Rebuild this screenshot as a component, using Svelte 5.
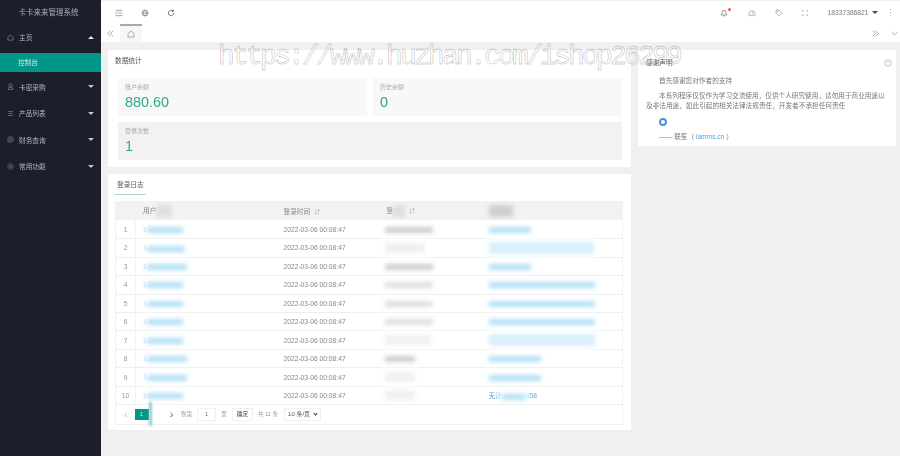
<script>
  const menu = [
    { name: "卡密采购", icon: "user" },
    { name: "产品列表", icon: "list" },
    { name: "财务查询", icon: "money" },
    { name: "常用功能", icon: "gear" },
  ];

  // widths of the blurred parts of each table row
  const rows = [
    { user: 36, ip: 48, ipStyle: "dark", addr: 42, addrTall: false },
    { user: 38, ip: 40, ipStyle: "soft", addr: 105, addrTall: true },
    { user: 40, ip: 48, ipStyle: "dark", addr: 42, addrTall: false },
    { user: 36, ip: 48, ipStyle: "mid", addr: 106, addrTall: false },
    { user: 36, ip: 48, ipStyle: "mid", addr: 106, addrTall: false },
    { user: 36, ip: 48, ipStyle: "mid", addr: 106, addrTall: false },
    { user: 36, ip: 46, ipStyle: "soft", addr: 106, addrTall: true },
    { user: 40, ip: 30, ipStyle: "dark", addr: 52, addrTall: false },
    { user: 40, ip: 30, ipStyle: "soft", addr: 52, addrTall: false },
    { user: 36, ip: 30, ipStyle: "soft", addr: 0, addrTall: false },
  ];
</script>

<div class="app">
  <aside class="sidebar">
    <div class="brand">卡卡来来管理系统</div>
    <div class="menu-item">
      <svg class="micon" viewBox="0 0 12 12"><path d="M1.500 5.500 6 1.500l4.500 4v5h-9z" /></svg>
      <span>主页</span>
      <i class="caret up"></i>
    </div>
    <div class="sub-item">控制台</div>
    {#each menu as m}
      <div class="menu-item">
        <svg class="micon" viewBox="0 0 12 12">
          {#if m.icon === "user"}
            <circle cx="6" cy="4" r="2.800" /><path d="M2 11c0-3 1.500-4 4-4s4 1 4 4z" />
          {:else if m.icon === "list"}
            <path d="M2 2.500h8M3 6h6M2 9.500h8" />
          {:else if m.icon === "money"}
            <circle cx="6" cy="6" r="4.700" /><circle cx="6" cy="6" r="1.700" />
          {:else}
            <circle cx="6" cy="6" r="4.500" stroke-dasharray="2 .6" /><circle cx="6" cy="6" r="1.800" />
          {/if}
        </svg>
        <span>{m.name}</span>
        <i class="caret"></i>
      </div>
    {/each}
  </aside>

  <div class="main">
    <header class="topbar">
      <div class="tools">
        <svg viewBox="0 0 12 12"><path d="M1 2h10M4.500 6H11M1 10h10M1 4.500 3 6 1 7.500" /></svg>
        <svg viewBox="0 0 12 12"><circle cx="6" cy="6" r="4.500" /><path d="M1.500 6h9M6 1.500c-3 3-3 6 0 9M6 1.500c3 3 3 6 0 9" /></svg>
        <svg class="dark" viewBox="0 0 12 12"><path d="M10 6a4 4 0 1 1-1.200-2.800M9.500 1v2.500H7" /></svg>
      </div>
      <div class="top-right">
        <span class="bell">
          <svg viewBox="0 0 12 12"><path d="M2 9h8L9 7.500V5a3 3 0 0 0-6 0v2.500zM5 10.500h2" /></svg>
          <i class="dot"></i>
        </span>
        <svg viewBox="0 0 12 12"><path d="M1.500 10V7a4.500 4.500 0 0 1 9 0v3zM6 8l2-4" /></svg>
        <svg viewBox="0 0 12 12"><path d="M1.500 1.500h4.500l4.500 4.500L6 10.500 1.500 6z" /><circle cx="4" cy="4" r=".7" /></svg>
        <svg class="small" viewBox="0 0 12 12"><path d="M1 4V1h3M8 1h3v3M11 8v3H8M4 11H1V8" /></svg>
        <span class="account">18337386821<i class="caret ink"></i></span>
        <span class="more"><i></i><i></i><i></i></span>
      </div>
    </header>

    <nav class="tabs">
      <svg class="chev" viewBox="0 0 10 10"><path d="M5 1 1 5l4 4M9 1 5 5l4 4" /></svg>
      <div class="tab">
        <svg viewBox="0 0 12 12"><path d="M1.500 5.500 6 1.500l4.500 4v5h-9z" /></svg>
      </div>
      <div class="tabs-end">
        <svg class="chev" viewBox="0 0 10 10"><path d="M1 1l4 4-4 4M5 1l4 4-4 4" /></svg>
        <svg class="chev" viewBox="0 0 10 10"><path d="M1 3l4 4 4-4" /></svg>
      </div>
    </nav>

    <div class="content">
      <div class="left">
        <section class="card stats">
          <h3>数据统计</h3>
          <div class="stat-grid">
            <div class="stat"><label>账户余额</label><strong>880.60</strong></div>
            <div class="stat"><label>历史余额</label><strong>0</strong></div>
            <div class="stat wide"><label>登录次数</label><strong>1</strong></div>
          </div>
        </section>

        <section class="card logs">
          <div class="tab-title"><span>登录日志</span></div>
          <table>
            <thead>
              <tr>
                <th class="num"></th>
                <th class="user">用户<b class="smudge head"></b></th>
                <th class="time">登录时间 <em>⇵</em></th>
                <th class="ip-head">登<b class="smudge head short"></b> <em>⇵</em></th>
                <th class="addr"><b class="smudge head wide"></b></th>
              </tr>
            </thead>
            <tbody>
              {#each rows as r, i}
                <tr>
                  <td class="num">{i + 1}</td>
                  <td class="user"><span class="link">1</span><b class="smudge blue" style="width: {r.user}px"></b></td>
                  <td class="time">2022-03-06 00:08:47</td>
                  <td class="ip"><b class="smudge {r.ipStyle}" style="width: {r.ip}px"></b></td>
                  <td class="addr">
                    {#if r.addr}
                      <b class="smudge blue" class:tall={r.addrTall} style="width: {r.addr}px"></b>
                    {:else}
                      <span class="link">无法</span><b class="smudge blue" style="width: 24px"></b><span class="link">958</span>
                    {/if}
                  </td>
                </tr>
              {/each}
            </tbody>
          </table>
          <div class="pager">
            <span class="arrow">‹</span>
            <span class="page">1</span>
            <b class="smudge strip"></b>
            <span class="arrow next">›</span>
            <span>到第</span>
            <span class="box">1</span>
            <span>页</span>
            <span class="box ok">确定</span>
            <span>共 11 条</span>
            <span class="box size">10 条/页 <i class="vee"></i></span>
          </div>
        </section>
      </div>

      <section class="card thanks">
        <div class="thanks-head">
          <h3>感谢声明</h3>
          <svg viewBox="0 0 12 12"><circle cx="6" cy="6" r="5" /><path d="M6 3.500v3M6 8v.8" /></svg>
        </div>
        <p>首先感谢您对作者的支持</p>
        <p>本系列程序仅仅作为学习交流使用，仅供个人研究使用，请勿用于商业用途以及非法用途，如此引起的相关法律法规责任，开发者不承担任何责任</p>
        <div class="ring"></div>
        <p class="sign">—— 联笙（ <span class="link">lamms.cn</span> ）</p>
      </section>
    </div>
  </div>

  <div class="watermark">https://www.huzhan.com/ishop26299</div>
</div>

<style>
  :global(body) {
    margin: 0;
    background: #f0f0f0;
  }

  .app {
    position: relative;
    display: flex;
    width: 900px;
    height: 456px;
    overflow: hidden;
    font-family: "Liberation Sans", "Noto Sans CJK SC", sans-serif;
    font-size: 6.700px;
    color: #666;
  }

  svg {
    fill: none;
    stroke: currentColor;
    stroke-width: 1;
  }

  .sidebar {
    width: 101px;
    flex-shrink: 0;
    background: #1c1f2b;
    color: #b5b8bf;
    filter: blur(0.3px);
  }

  .brand {
    height: 24px;
    line-height: 25px;
    padding-right: 4px;
    text-align: center;
    font-size: 7.500px;
    color: #a8abb2;
  }

  .menu-item {
    display: flex;
    align-items: center;
    height: 26.400px;
    padding: 0 7px;
  }

  .menu-item span {
    margin-left: 5px;
    flex: 1;
  }

  .micon {
    width: 7px;
    height: 7px;
    color: #9a9da5;
  }

  .caret {
    width: 0;
    height: 0;
    border-left: 3px solid transparent;
    border-right: 3px solid transparent;
    border-top: 3px solid #c6c8cc;
  }

  .caret.up {
    border-top: 0;
    border-bottom: 3px solid #e8e8e8;
  }

  .caret.ink {
    display: inline-block;
    margin-left: 3px;
    vertical-align: 1px;
    border-top-color: #444;
  }

  .sub-item {
    height: 19px;
    line-height: 19px;
    padding-left: 18px;
    margin: 2.600px 0 1.800px;
    background: #009688;
    color: #cfeae6;
  }

  .main {
    flex: 1;
    min-width: 0;
    display: flex;
    flex-direction: column;
    filter: blur(0.3px);
  }

  .topbar {
    height: 23px;
    flex-shrink: 0;
    display: flex;
    justify-content: space-between;
    align-items: center;
    padding: 0 9px 0 14px;
    background: #fff;
    border-top: 1px solid #eee;
    color: #555;
  }

  .topbar svg {
    width: 8px;
    height: 8px;
    display: block;
  }

  .tools {
    display: flex;
    gap: 18px;
    color: #777;
  }

  .tools .dark {
    color: #333;
  }

  .top-right {
    display: flex;
    align-items: center;
    gap: 19.300px;
    color: #999;
  }

  .topbar svg.small {
    width: 6px;
    height: 6px;
  }

  .bell {
    position: relative;
    color: #666;
  }

  .dot {
    position: absolute;
    top: -1px;
    right: -3px;
    width: 3px;
    height: 3px;
    border-radius: 50%;
    background: #ff5722;
  }

  .account {
    color: #777;
    margin-left: 0;
    white-space: nowrap;
  }

  .more {
    display: flex;
    flex-direction: column;
    gap: 1.500px;
    margin-left: -7.300px;
  }

  .more i {
    width: 1.500px;
    height: 1.500px;
    background: #999;
    border-radius: 50%;
  }

  .tabs {
    height: 18px;
    flex-shrink: 0;
    display: flex;
    align-items: center;
    padding: 0 2px 0 6px;
    background: #fff;
  }

  .chev {
    width: 7px;
    height: 7px;
    color: #888;
  }

  .tab {
    width: 22px;
    height: 18px;
    margin-left: 6px;
    display: flex;
    align-items: center;
    justify-content: center;
    box-sizing: border-box;
    border-top: 2px solid #a9a9a9;
    background: #f6f6f6;
    color: #888;
  }

  .tab svg {
    width: 8px;
    height: 8px;
  }

  .tabs-end {
    margin-left: auto;
    display: flex;
    gap: 12px;
  }

  .content {
    flex: 1;
    display: flex;
    align-items: flex-start;
    gap: 7px;
    padding: 8px 4px 0 7px;
    background: #f0f0f0;
  }

  .left {
    width: 523px;
    flex-shrink: 0;
    display: flex;
    flex-direction: column;
    gap: 7px;
  }

  .card {
    background: #fff;
    border-radius: 1px;
  }

  h3 {
    margin: 0;
    font-size: 6.700px;
    font-weight: 400;
    color: #555;
  }

  .stats {
    height: 117px;
    box-sizing: border-box;
    padding: 6px 9px 0 7px;
  }

  .stats h3 {
    line-height: 9px;
  }

  .stat-grid {
    display: grid;
    grid-template-columns: 249px 249px;
    gap: 6px;
    margin: 13px 0 0 3px;
  }

  .stat {
    height: 38px;
    box-sizing: border-box;
    padding: 5px 7px;
    background: #f8f8f8;
  }

  .stat.wide {
    grid-column: span 2;
    background: #f2f2f2;
  }

  .stat label {
    display: block;
    font-size: 6px;
    line-height: 8px;
    color: #aaa;
  }

  .stat strong {
    display: block;
    margin-top: 2px;
    font-size: 14.400px;
    line-height: 18px;
    font-weight: 400;
    color: #2fa98c;
  }

  .logs {
    height: 256px;
    box-sizing: border-box;
    padding: 0 8px 0 7px;
  }

  .tab-title {
    height: 21px;
    display: flex;
    align-items: flex-end;
    margin-bottom: 6px;
  }

  .tab-title span {
    width: 29px;
    padding: 0 0 5px 2px;
    white-space: nowrap;
    color: #555;
    border-bottom: 1px solid #a9d5cc;
  }

  table {
    width: 508px;
    border-collapse: collapse;
    table-layout: fixed;
    border-left: 1px solid #f2f2f2;
    border-right: 1px solid #f2f2f2;
  }

  th {
    height: 19.300px;
    padding: 0;
    text-align: left;
    font-weight: 400;
    background: #f2f2f2;
    color: #888;
  }

  em {
    font-style: normal;
    font-size: 6px;
    color: #aaa;
    margin-left: 2px;
  }

  td {
    height: 18.440px;
    box-sizing: border-box;
    padding: 0;
    border-bottom: 1px solid #eee;
    white-space: nowrap;
    overflow: visible;
    color: #888;
  }

  .num {
    width: 19px;
    text-align: center;
    color: #999;
    border-right: 1px solid #f2f2f2;
  }

  .user {
    width: 148px;
    padding-left: 7px;
    box-sizing: border-box;
  }

  .time {
    width: 103px;
  }

  .ip-head {
    width: 102px;
  }

  .ip .smudge {
    margin-left: -2px;
  }

  .link {
    color: #4aa6dc;
  }

  .smudge {
    display: inline-block;
    height: 6px;
    vertical-align: middle;
    filter: blur(2px);
  }

  .smudge.blue {
    background: #b4e0f8;
    box-shadow: 0 0 0 4px rgba(255, 255, 255, 0.8);
  }

  .smudge.tall {
    height: 12px;
    background: #d9effb;
  }

  .smudge.dark {
    background: #cfcfcf;
    box-shadow: 0 0 0 4px rgba(255, 255, 255, 0.8);
  }

  .smudge.mid {
    background: #e0e0e0;
    box-shadow: 0 0 0 4px rgba(255, 255, 255, 0.8);
  }

  .smudge.soft {
    height: 10px;
    background: #f0f0f0;
    box-shadow: 0 0 0 4px rgba(255, 255, 255, 0.8);
  }

  .smudge.head {
    width: 16px;
    height: 12px;
    background: #dedede;
  }

  .smudge.head.short {
    width: 12px;
  }

  .smudge.head.wide {
    width: 24px;
    background: #cfcfcf;
  }

  .smudge.strip {
    width: 3px;
    height: 24px;
    margin-left: -5px;
    background: #8fcfc6;
    filter: blur(1px);
  }

  .pager {
    display: flex;
    align-items: center;
    gap: 5px;
    width: 498px;
    height: 18.500px;
    padding-left: 8px;
    border: 1px solid #f2f2f2;
    border-top: 0;
    color: #999;
    font-size: 5.600px;
  }

  .arrow {
    font-size: 11px;
    line-height: 10px;
    color: #ccc;
  }

  .arrow.next {
    color: #666;
    margin: 0 2.500px 0 13px;
  }

  .page {
    width: 14px;
    height: 11px;
    line-height: 11px;
    margin-left: 2px;
    text-align: center;
    background: #009688;
    color: #cfeae6;
  }

  .box {
    padding: 0 7px;
    height: 11px;
    line-height: 11px;
    border: 1px solid #f0f0f0;
    color: #777;
  }

  .ok {
    padding: 0 4px;
    color: #444;
  }

  .size {
    padding: 0 3px;
    margin-left: 1px;
    font-size: 6px;
    color: #555;
  }

  .vee {
    display: inline-block;
    width: 2px;
    height: 2px;
    margin-left: 2px;
    vertical-align: 1px;
    border-right: 1px solid #333;
    border-bottom: 1px solid #333;
    transform: rotate(45deg);
  }

  .thanks {
    width: 258px;
    height: 96px;
    box-sizing: border-box;
    padding: 0 11px 0 8px;
    line-height: 10px;
    flex-shrink: 0;
  }

  .thanks-head {
    height: 26px;
    display: flex;
    justify-content: space-between;
    align-items: center;
    margin-right: -7px;
  }

  .thanks-head svg {
    width: 8px;
    height: 8px;
    color: #aaa;
  }

  .thanks p {
    margin: 0 0 5px;
    text-indent: 13px;
    font-size: 6.650px;
    color: #777;
  }

  .ring {
    width: 4px;
    height: 4px;
    margin: 7px 0 6px 13px;
    border: 2px solid #4a90e2;
    border-radius: 50%;
  }

  .thanks .sign {
    margin: 0;
  }

  .watermark {
    position: absolute;
    left: 218px;
    top: 40px;
    font-family: "Liberation Mono", monospace;
    font-size: 28px;
    line-height: 34px;
    letter-spacing: -2.800px;
    white-space: nowrap;
    color: transparent;
    -webkit-text-stroke: 0.4px #aaa;
    pointer-events: none;
  }
</style>
